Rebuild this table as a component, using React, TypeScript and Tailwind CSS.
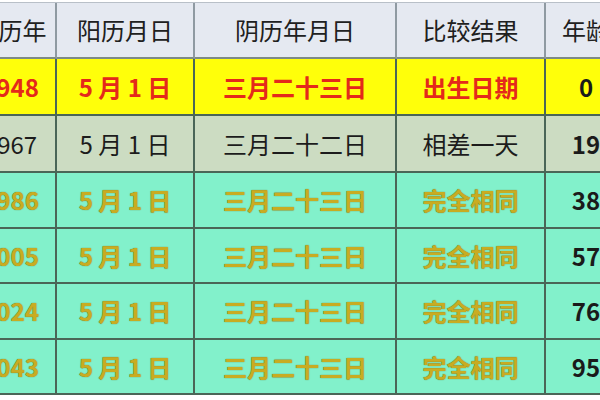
const font = "font-['Noto_Sans_CJK_SC','Noto_Sans',sans-serif]";

type Row = {
  year: string;
  solar: string;
  lunar: string;
  result: string;
  age: string;
  bg: string;
  tone: string;
  ageTone: string;
  h: string;
};

const gold = "font-bold text-[#c8ac22] [text-shadow:0_0_1px_#6a5500]";

const rows: Row[] = [
  { year: "1948", solar: "5 月 1 日", lunar: "三月二十三日", result: "出生日期", age: "0", bg: "bg-[#ffff0a]", tone: "font-bold text-[#e4291b]", ageTone: "font-bold text-[#1a1a1a]", h: "h-[57px]" },
  { year: "1967", solar: "5 月 1 日", lunar: "三月二十二日", result: "相差一天", age: "19", bg: "bg-[#ccdcc2]", tone: "font-normal text-[#1c1c1c]", ageTone: "font-bold text-[#1a1a1a]", h: "h-[57px]" },
  { year: "1986", solar: "5 月 1 日", lunar: "三月二十三日", result: "完全相同", age: "38", bg: "bg-[#82f1cb]", tone: gold, ageTone: "font-bold text-[#1a1a1a]", h: "h-[56px]" },
  { year: "2005", solar: "5 月 1 日", lunar: "三月二十三日", result: "完全相同", age: "57", bg: "bg-[#82f1cb]", tone: gold, ageTone: "font-bold text-[#1a1a1a]", h: "h-[55px]" },
  { year: "2024", solar: "5 月 1 日", lunar: "三月二十三日", result: "完全相同", age: "76", bg: "bg-[#82f1cb]", tone: gold, ageTone: "font-bold text-[#1a1a1a]", h: "h-[56px]" },
  { year: "2043", solar: "5 月 1 日", lunar: "三月二十三日", result: "完全相同", age: "95", bg: "bg-[#82f1cb]", tone: gold, ageTone: "font-bold text-[#1a1a1a]", h: "h-[55px]" },
];

const headers = ["公历年", "阳历月日", "阴历年月日", "比较结果", "年龄"];

const cell = "flex items-center justify-center border-r-2 border-b-2 border-[#4a6657] whitespace-nowrap";

export default function App() {
  return (
    <div className={`w-[600px] h-[400px] overflow-hidden bg-white pt-[2px] ${font}`}>
      <div className="-ml-[34px] w-[662px] grid grid-cols-[91px_138px_202px_149px_82px] border-t border-[#b9c0c8] text-[24px] leading-none">
        {headers.map((h) => (
          <div key={h} className={`${cell} h-[56px] bg-[#e5e9f1] text-[#202020] border-r-[#8f9aa2] border-b-[#7d8a86]`}>
            {h}
          </div>
        ))}
        {rows.map((r) => (
          <div key={r.year} className="contents">
            <div className={`${cell} ${r.h} ${r.bg} ${r.tone}`}>{r.year}</div>
            <div className={`${cell} ${r.h} ${r.bg} ${r.tone}`}>{r.solar}</div>
            <div className={`${cell} ${r.h} ${r.bg} ${r.tone}`}>{r.lunar}</div>
            <div className={`${cell} ${r.h} ${r.bg} ${r.tone}`}>{r.result}</div>
            <div className={`${cell} ${r.h} ${r.bg} ${r.ageTone}`}>{r.age}</div>
          </div>
        ))}
      </div>
    </div>
  );
}
